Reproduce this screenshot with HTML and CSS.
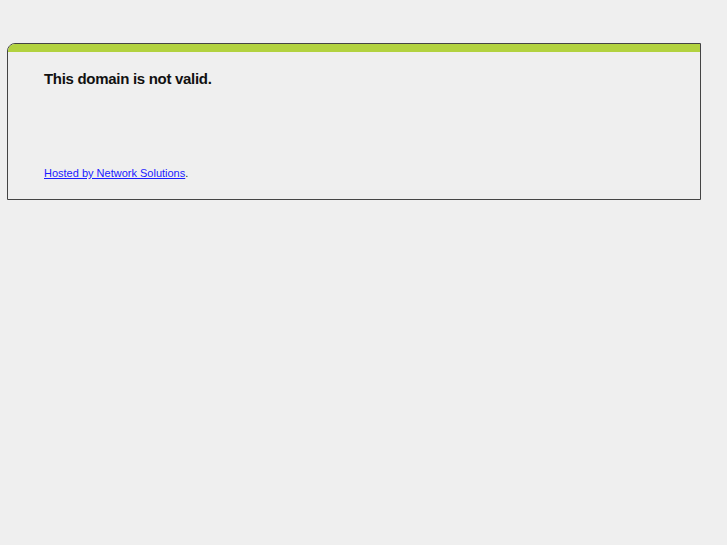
FILE: index.html
```html
<!DOCTYPE html>
<html>
<head>
<meta charset="utf-8">
<link rel="stylesheet" href="styles.css">
</head>
<body>
<div class="box">
  <div class="bar"></div>
  <div class="content">
    <h1 class="title">This domain is not valid.</h1>
    <p class="hosted"><a href="#">Hosted by Network Solutions</a>.</p>
  </div>
</div>
</body>
</html>
```
FILE: styles.css
```css
html, body {
  margin: 0;
  padding: 0;
  background: #efefef;
  font-family: "Liberation Sans", Arial, sans-serif;
}
.box {
  margin: 43px 0 0 7px;
  width: 692px;
  height: 155px;
  border: 1px solid #444;
  border-top-left-radius: 8px;
  overflow: hidden;
  background: #efefef;
}
.bar {
  height: 8px;
  background: #b2d23f;
}
.content {
  padding: 17px 0 0 36px;
}
.title {
  margin: 0;
  font-size: 15px;
  font-weight: bold;
  letter-spacing: -0.3px;
  color: #111;
  line-height: 20px;
}
.hosted {
  margin: 78px 0 0;
  font-size: 11px;
  line-height: 13px;
  color: #222;
}
.hosted a {
  color: #1a1aff;
}
```
